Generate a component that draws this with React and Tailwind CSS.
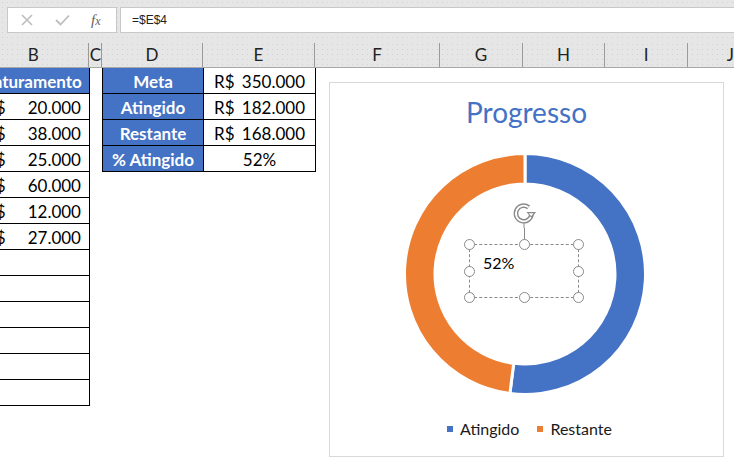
import React from 'react';

const BLUE = '#4472c4';
const ORANGE = '#ed7d31';

const faturamento = ['20.000', '38.000', '25.000', '60.000', '12.000', '27.000', '', '', '', '', '', ''];

const resumo = [
    { label: 'Meta', value: '350.000' },
    { label: 'Atingido', value: '182.000' },
    { label: 'Restante', value: '168.000' },
    { label: '% Atingido', value: '52%', plain: true },
];

// ring segment, angles in degrees clockwise from the top
const arcPath = (cx, cy, r0, r1, a0, a1) => {
    const p = (r, a) => [cx + r * Math.sin((a * Math.PI) / 180), cy - r * Math.cos((a * Math.PI) / 180)];
    const large = a1 - a0 > 180 ? 1 : 0;
    const [x0, y0] = p(r1, a0);
    const [x1, y1] = p(r1, a1);
    const [x2, y2] = p(r0, a1);
    const [x3, y3] = p(r0, a0);
    return `M${x0} ${y0} A${r1} ${r1} 0 ${large} 1 ${x1} ${y1} L${x2} ${y2} A${r0} ${r0} 0 ${large} 0 ${x3} ${y3} Z`;
};

const Donut = () => {
    const split = 0.52 * 360;
    return (
        <svg width="244" height="244" viewBox="0 0 244 244" className="mt-[26px] mr-[4px]">
            <path d={arcPath(122, 122, 90, 120.5, 0, split)} fill={BLUE} stroke="#fff" strokeWidth="3" />
            <path d={arcPath(122, 122, 90, 120.5, split, 360)} fill={ORANGE} stroke="#fff" strokeWidth="3" />
        </svg>
    );
};

const Handle = ({ className }) => (
    <span className={`absolute w-[11px] h-[11px] rounded-full bg-white border-[1.5px] border-[#8a8a8a] ${className}`} />
);

const SelectedLabel = () => (
    <>
        {/* rotation handle */}
        <svg width="28" height="28" viewBox="0 0 28 28" className="absolute left-[181px] top-[117px]">
            <path d="M17.6 7.4 A7.8 7.8 0 1 0 20.5 13.5" fill="none" stroke="#8a8a8a" strokeWidth="4.6" />
            <path d="M17.6 7.4 A7.8 7.8 0 1 0 20.5 13.5" fill="none" stroke="#fff" strokeWidth="1.8" />
            <path d="M15.5 12 L25 12 L20.5 18 Z" fill="#8a8a8a" />
            <path d="M17.8 13.3 L22.4 13.3 L20.2 16.2 Z" fill="#fff" />
            <line x1="13" y1="22.5" x2="13" y2="28" stroke="#8a8a8a" strokeWidth="1" />
        </svg>
        <div className="absolute left-[193.5px] top-[145px] w-px h-[16px] bg-[#8a8a8a]" />
        <div className="absolute left-[139px] top-[161px] w-[110px] h-[54px] border border-dashed border-[#8a8a8a]">
            <span className="absolute left-[13px] top-[10px] text-[16px] leading-none text-black">52%</span>
            <Handle className="-left-[6px] -top-[6px]" />
            <Handle className="left-[48.5px] -top-[6px]" />
            <Handle className="-right-[6px] -top-[6px]" />
            <Handle className="-left-[6px] top-[20.5px]" />
            <Handle className="-right-[6px] top-[20.5px]" />
            <Handle className="-left-[6px] -bottom-[6px]" />
            <Handle className="left-[48.5px] -bottom-[6px]" />
            <Handle className="-right-[6px] -bottom-[6px]" />
        </div>
    </>
);

const Chart = () => (
    <div className="relative ml-[13px] mt-[14px] w-[395px] h-[375px] border border-[#d9d9d9] bg-white flex flex-col items-center">
        <h2 className="pt-[15px] text-[28px] leading-none text-[#4472c4] font-normal">Progresso</h2>
        <Donut />
        <div className="mt-[25px] flex items-center gap-[18px] text-[16px] leading-none text-[#1a1a1a] ml-[6px]">
            <span className="flex items-center gap-[7px]">
                <span className="w-[6px] h-[6px] bg-[#4472c4]" />
                Atingido
            </span>
            <span className="flex items-center gap-[7px]">
                <span className="w-[6px] h-[6px] bg-[#ed7d31]" />
                Restante
            </span>
        </div>
        <SelectedLabel />
    </div>
);

const App = () => {
    return (
        <div className="w-[734px] h-[466px] overflow-hidden bg-white font-['Lato',sans-serif] text-black">
            {/* Formula bar */}
            <div className="h-[42px] bg-[#e6e6e6] bg-[radial-gradient(circle,#d2d2d2_0.6px,transparent_0.9px)] bg-[length:5px_5px] flex items-start pt-[7px] pl-[7px] gap-[3px]">
                <div className="w-[110px] h-[26px] bg-white border border-[#c8c8c8] flex items-center">
                    <svg width="12" height="12" viewBox="0 0 12 12" className="ml-[13px]">
                        <path d="M1 1 L11 11 M11 1 L1 11" stroke="#bdbdbd" strokeWidth="1.6" />
                    </svg>
                    <svg width="15" height="12" viewBox="0 0 15 12" className="ml-[22px]">
                        <path d="M1 6 L5.5 10.5 L14 1.5" fill="none" stroke="#bdbdbd" strokeWidth="1.8" />
                    </svg>
                    <span className="ml-[21px] font-['Liberation_Serif',serif] italic text-[15px] leading-none text-[#5f5f5f]">
                        f<span className="text-[12px]">x</span>
                    </span>
                </div>
                <div className="flex-1 -mr-[2px] h-[26px] bg-white border border-[#c8c8c8] flex items-center pl-[11px] font-['Liberation_Sans',sans-serif] text-[12px] text-[#222]">
                    =$E$4
                </div>
            </div>

            {/* Column headers */}
            <div className="h-[26px] bg-[#e6e6e6] bg-[radial-gradient(circle,#d2d2d2_0.6px,transparent_0.9px)] bg-[length:5px_5px] border-b border-[#a8a8a8] flex items-stretch text-[17px] text-[#222]">
                <div className="-ml-[22px] w-[112px] mt-px border-r border-[#9a9a9a] flex items-center justify-center">B</div>
                <div className="w-[13px] mt-px border-r border-[#9a9a9a] flex items-center justify-center">C</div>
                <div className="w-[101px] mt-px border-r border-[#9a9a9a] flex items-center justify-center">D</div>
                <div className="w-[113px] mt-px border-r border-[#9a9a9a] flex items-center justify-center">E</div>
                <div className="w-[126px] mt-px border-r border-[#9a9a9a] flex items-center justify-center">F</div>
                <div className="w-[83px] mt-px border-r border-[#9a9a9a] flex items-center justify-center">G</div>
                <div className="w-[83px] mt-px border-r border-[#9a9a9a] flex items-center justify-center">H</div>
                <div className="w-[83px] mt-px border-r border-[#9a9a9a] flex items-center justify-center">I</div>
                <div className="flex-1 mt-px flex items-center pl-[39px]">J</div>
            </div>

            {/* Sheet body */}
            <div className="flex items-start text-[17px]">
                {/* Column B */}
                <div className="-ml-[22px] w-[112px] border-r border-black">
                    <div className="h-[26px] bg-[#4472c4] border-b border-black flex items-center justify-center font-bold text-white pt-[2px]">
                        Faturamento
                    </div>
                    {faturamento.map((v, i) => (
                        <div key={i} className="h-[26px] border-b border-black flex items-center justify-between pl-[7px] pr-[8px] pt-[2px]">
                            {v && <span>R$</span>}
                            {v && <span>{v}</span>}
                        </div>
                    ))}
                </div>

                {/* Column C */}
                <div className="w-[12px]" />

                {/* Columns D-E */}
                <div className="border-l border-black">
                    {resumo.map((r) => (
                        <div key={r.label} className="flex h-[26px] border-b border-black">
                            <div className="w-[101px] bg-[#4472c4] border-r border-black flex items-center justify-center font-bold text-white pt-[2px]">
                                {r.label}
                            </div>
                            <div className="w-[112px] border-r border-black flex items-center pt-[2px]">
                                {r.plain ? (
                                    <span className="w-full text-center">{r.value}</span>
                                ) : (
                                    <span className="w-full flex justify-between pl-[10px] pr-[10px]">
                                        <span>R$</span>
                                        <span>{r.value}</span>
                                    </span>
                                )}
                            </div>
                        </div>
                    ))}
                </div>

                <Chart />
            </div>
        </div>
    );
};

export default App;
